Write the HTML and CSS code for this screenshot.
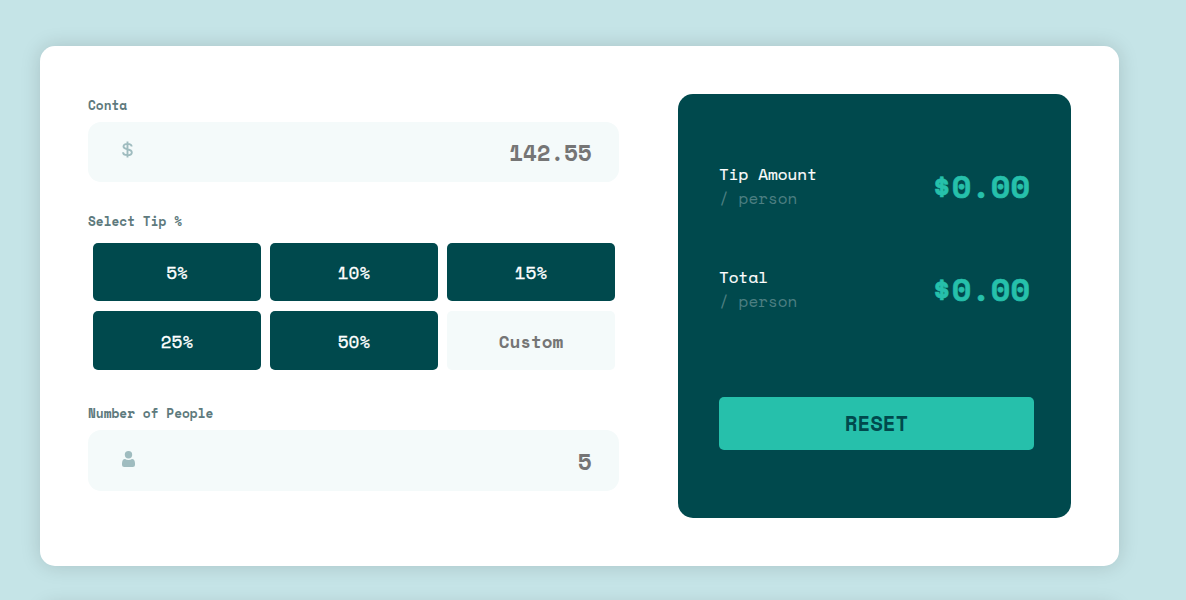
FILE: index.html
```html
<!DOCTYPE html>
<html lang="en">
<head>
<meta charset="utf-8">
<title>Tip Calculator</title>
<link rel="stylesheet" href="styles.css">
</head>
<body>
<main class="card">
  <section class="form">
    <label class="label" for="bill">Conta</label>
    <div class="field">
      <svg class="dollar" viewBox="0 0 11 17" width="11" height="17"><path d="M5.500 .5V16.500M9.600 5.600C9.600 3.800 7.900 2.900 5.500 2.900S1.500 3.900 1.500 5.500C1.500 7.300 3.200 7.800 5.500 8.300S9.800 9.500 9.800 11.400C9.800 13.200 8 14.100 5.500 14.100S1.100 13.200 1.100 11.200"/></svg>
      <input class="input" id="bill" placeholder="142.55">
    </div>
    <div class="label label-tip">Select Tip %</div>
    <div class="tips">
      <button class="tip">5%</button>
      <button class="tip">10%</button>
      <button class="tip">15%</button>
      <button class="tip">25%</button>
      <button class="tip">50%</button>
      <input class="tip custom" placeholder="Custom">
    </div>
    <label class="label label-people" for="people">Number of People</label>
    <div class="field field-people">
      <svg class="person" viewBox="0 0 13 16" width="13" height="16"><circle cx="6.5" cy="3.7" r="3.7"/><path d="M3 8C1 8 0 10 0 12.6V14Q0 16 2.200 16H10.800Q13 16 13 14V12.600C13 10 12 8 10 8Q8.500 9 6.500 9T3 8Z"/></svg>
      <input class="input" id="people" placeholder="5">
    </div>
  </section>
  <section class="panel">
    <div class="result">
      <div class="caption"><div class="name">Tip Amount</div><div class="per">/ person</div></div>
      <div class="amount">$0.00</div>
    </div>
    <div class="result">
      <div class="caption"><div class="name">Total</div><div class="per">/ person</div></div>
      <div class="amount">$0.00</div>
    </div>
    <button class="reset">RESET</button>
  </section>
</main>
<footer class="footer"></footer>
</body>
</html>
```

FILE: styles.css
```css
* { box-sizing: border-box; }
body {
  display: flow-root;
  margin: 0;
  height: 600px;
  overflow: hidden;
  background: #c5e4e7;
  font-family: "Space Mono", "Liberation Mono", monospace;
}
button, input { border: 0; font-family: inherit; }
.card {
  display: flex;
  justify-content: space-between;
  width: 1079px;
  height: 520px;
  margin: 46px 0 0 40px;
  padding: 48px;
  border-radius: 15px;
  background: #fff;
  box-shadow: 0 0 20px rgba(0, 0, 0, .15);
}
.footer {
  width: 1079px;
  height: 40px;
  margin: 40px 0 0 40px;
  border-radius: 15px;
  box-shadow: 0 0 20px rgba(0, 0, 0, .15);
}
.form { width: 531px; }
.label {
  display: block;
  height: 28px;
  line-height: 24px;
  font-size: 12.8px;
  font-weight: 700;
  color: #5e7a7d;
}
.field {
  display: flex;
  align-items: center;
  height: 60px;
  padding: 0 27.5px 0 34px;
  border-radius: 13px;
  background: #f4fafa;
}
.dollar {
  margin-bottom: 5px;
  fill: none;
  stroke: #9fbcbf;
  stroke-width: 1.9;
}
.person { margin-bottom: 3px; fill: #9fbcbf; }
.input {
  flex: 1;
  min-width: 0;
  padding: 1px 0 0;
  background: none;
  text-align: right;
  font-size: 22.4px;
  font-weight: 700;
}
.input::placeholder, .custom::placeholder { color: #757575; opacity: 1; }
.label-tip { height: 33px; margin-top: 28px; }
.tips {
  display: grid;
  grid-template-columns: repeat(3, 168px);
  grid-template-rows: 58px 59px;
  gap: 10px 9px;
  padding-left: 5px;
}
.tip {
  width: 168px;
  padding: 0;
  border-radius: 5px;
  background: #00494d;
  color: #fff;
  text-align: center;
  font-size: 17.6px;
  font-weight: 400;
  -webkit-text-stroke: .35px currentColor;
}
.custom {
  padding-top: 1px;
  background: #f4fafa;
  font-weight: 700;
  -webkit-text-stroke: 0;
}
.label-people { margin-top: 32px; }
.field-people { height: 61px; }
.panel {
  width: 393px;
  height: 424px;
  padding: 68px 37px 0 41px;
  border-radius: 15px;
  background: #00494d;
}
.result {
  display: flex;
  justify-content: space-between;
  height: 103px;
  padding-right: 4px;
}
.caption { font-size: 16px; line-height: 24px; }
.name { color: #fff; -webkit-text-stroke: .2px #fff; }
.per { color: #4d7f82; }
.amount {
  font-size: 32px;
  line-height: 49px;
  font-weight: 700;
  color: #26c0ab;
  -webkit-text-stroke: .5px #26c0ab;
}
.reset {
  display: block;
  width: 315px;
  height: 53px;
  margin-top: 29px;
  padding: 0;
  border-radius: 5px;
  background: #26c0ab;
  color: #00494d;
  font-size: 20.8px;
  font-weight: 700;
}
```
